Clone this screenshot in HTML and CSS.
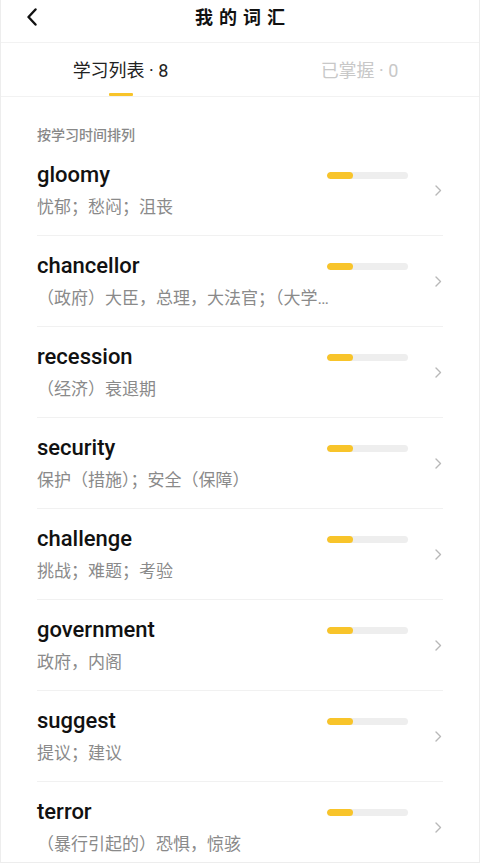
FILE: index.html
```html
<!DOCTYPE html>
<html lang="zh-CN">
<head>
  <meta charset="UTF-8">
  <meta name="viewport" content="width=device-width, initial-scale=1.0">
  <title>我的词汇</title>
  <link rel="stylesheet" href="styles.css">
</head>
<body>
  <div class="page">
    <!-- Header -->
    <div class="header">
      <div class="back">
        <svg width="12" height="18" viewBox="0 0 12 18"><path d="M9.5 1.5 L2.5 9 L9.5 16.5" fill="none" stroke="#111" stroke-width="2.4" stroke-linecap="round" stroke-linejoin="round"/></svg>
      </div>
      <div class="title">我的词汇</div>
    </div>

    <!-- Tabs -->
    <div class="tabs">
      <div class="tab active">学习列表 · 8</div>
      <div class="tab">已掌握 · 0</div>
    </div>

    <div class="section-label">按学习时间排列</div>

    <div class="word-list">
      <div class="word-row">
        <div class="word-main">
          <div class="word-top">
            <div class="word">gloomy</div>
            <div class="progress"><div class="progress-fill" style="width: 32%"></div></div>
          </div>
          <div class="meaning">忧郁；愁闷；沮丧</div>
        </div>
        <div class="arrow"><svg width="7" height="11" viewBox="0 0 7 11"><path d="M1 1 L5.5 5.5 L1 10" fill="none" stroke="#b8b8b8" stroke-width="1.4" stroke-linecap="round" stroke-linejoin="round"/></svg></div>
      </div>

      <div class="word-row">
        <div class="word-main">
          <div class="word-top">
            <div class="word">chancellor</div>
            <div class="progress"><div class="progress-fill" style="width: 32%"></div></div>
          </div>
          <div class="meaning">（政府）大臣，总理，大法官；（大学校长）</div>
        </div>
        <div class="arrow"><svg width="7" height="11" viewBox="0 0 7 11"><path d="M1 1 L5.5 5.5 L1 10" fill="none" stroke="#b8b8b8" stroke-width="1.4" stroke-linecap="round" stroke-linejoin="round"/></svg></div>
      </div>

      <div class="word-row">
        <div class="word-main">
          <div class="word-top">
            <div class="word">recession</div>
            <div class="progress"><div class="progress-fill" style="width: 32%"></div></div>
          </div>
          <div class="meaning">（经济）衰退期</div>
        </div>
        <div class="arrow"><svg width="7" height="11" viewBox="0 0 7 11"><path d="M1 1 L5.5 5.5 L1 10" fill="none" stroke="#b8b8b8" stroke-width="1.4" stroke-linecap="round" stroke-linejoin="round"/></svg></div>
      </div>

      <div class="word-row">
        <div class="word-main">
          <div class="word-top">
            <div class="word">security</div>
            <div class="progress"><div class="progress-fill" style="width: 32%"></div></div>
          </div>
          <div class="meaning">保护（措施）；安全（保障）</div>
        </div>
        <div class="arrow"><svg width="7" height="11" viewBox="0 0 7 11"><path d="M1 1 L5.5 5.5 L1 10" fill="none" stroke="#b8b8b8" stroke-width="1.4" stroke-linecap="round" stroke-linejoin="round"/></svg></div>
      </div>

      <div class="word-row">
        <div class="word-main">
          <div class="word-top">
            <div class="word">challenge</div>
            <div class="progress"><div class="progress-fill" style="width: 32%"></div></div>
          </div>
          <div class="meaning">挑战；难题；考验</div>
        </div>
        <div class="arrow"><svg width="7" height="11" viewBox="0 0 7 11"><path d="M1 1 L5.5 5.5 L1 10" fill="none" stroke="#b8b8b8" stroke-width="1.4" stroke-linecap="round" stroke-linejoin="round"/></svg></div>
      </div>

      <div class="word-row">
        <div class="word-main">
          <div class="word-top">
            <div class="word">government</div>
            <div class="progress"><div class="progress-fill" style="width: 32%"></div></div>
          </div>
          <div class="meaning">政府，内阁</div>
        </div>
        <div class="arrow"><svg width="7" height="11" viewBox="0 0 7 11"><path d="M1 1 L5.5 5.5 L1 10" fill="none" stroke="#b8b8b8" stroke-width="1.4" stroke-linecap="round" stroke-linejoin="round"/></svg></div>
      </div>

      <div class="word-row">
        <div class="word-main">
          <div class="word-top">
            <div class="word">suggest</div>
            <div class="progress"><div class="progress-fill" style="width: 32%"></div></div>
          </div>
          <div class="meaning">提议；建议</div>
        </div>
        <div class="arrow"><svg width="7" height="11" viewBox="0 0 7 11"><path d="M1 1 L5.5 5.5 L1 10" fill="none" stroke="#b8b8b8" stroke-width="1.4" stroke-linecap="round" stroke-linejoin="round"/></svg></div>
      </div>

      <div class="word-row">
        <div class="word-main">
          <div class="word-top">
            <div class="word">terror</div>
            <div class="progress"><div class="progress-fill" style="width: 32%"></div></div>
          </div>
          <div class="meaning">（暴行引起的）恐惧，惊骇</div>
        </div>
        <div class="arrow"><svg width="7" height="11" viewBox="0 0 7 11"><path d="M1 1 L5.5 5.5 L1 10" fill="none" stroke="#b8b8b8" stroke-width="1.4" stroke-linecap="round" stroke-linejoin="round"/></svg></div>
      </div>
    </div>
  </div>
</body>
</html>
```

FILE: styles.css
```css
body {
  margin: 0;
  padding: 0;
  background-color: #fff;
  font-family: Roboto, "Noto Sans CJK SC", sans-serif;
  color: #111;
}

.page {
  height: 863px;
  overflow: hidden;
  box-sizing: border-box;
  border: 1px solid #ededed;
  border-top: none;
}

/* Header */
.header {
  height: 43px;
  border-bottom: 1px solid #f2f2f2;
  display: flex;
  align-items: center;
  justify-content: center;
  position: relative;
  padding-bottom: 6px;
  box-sizing: border-box;
}

.header .back {
  position: absolute;
  left: 25px;
  top: 8px;
  line-height: 0;
}

.header .title {
  font-size: 18px;
  font-weight: bold;
  letter-spacing: 6px;
  margin-right: -6px;
  line-height: 24px;
}

/* Tabs */
.tabs {
  display: flex;
  height: 54px;
  border-bottom: 1px solid #f2f2f2;
  box-sizing: border-box;
}

.tab {
  flex: 1;
  text-align: center;
  font-size: 18px;
  line-height: 24px;
  padding-top: 16px;
  color: #c8c8c8;
  position: relative;
}

.tab.active {
  color: #222;
}

.tab.active::after {
  content: "";
  position: absolute;
  left: 50%;
  bottom: 0;
  width: 24px;
  height: 3px;
  margin-left: -12px;
  background-color: #f8c42a;
  border-radius: 1px;
}

/* List */
.section-label {
  margin: 28px 36px 0;
  font-size: 14px;
  line-height: 20px;
  font-weight: 500;
  color: #888;
}

.word-list {
  padding: 0 36px;
}

.word-row {
  display: flex;
  align-items: center;
  height: 91px;
  box-sizing: border-box;
  border-bottom: 1px solid #f1f1f1;
}

.word-main {
  width: 371px;
}

.word-top {
  display: flex;
  align-items: center;
  justify-content: space-between;
}

.word {
  font-size: 22px;
  font-weight: 500;
  line-height: 26px;
  color: #111;
}

.progress {
  width: 81px;
  height: 7px;
  border-radius: 4px;
  background-color: #eeeeee;
  overflow: hidden;
}

.progress-fill {
  height: 100%;
  border-radius: 4px;
  background-color: #f8c42a;
}

.meaning {
  margin-top: 8px;
  width: 298px;
  font-size: 17px;
  line-height: 22px;
  color: #8a8a8a;
  white-space: nowrap;
  overflow: hidden;
  text-overflow: ellipsis;
}

.arrow {
  flex: 1;
  display: flex;
  justify-content: flex-end;
  padding-right: 1px;
  line-height: 0;
}
```
